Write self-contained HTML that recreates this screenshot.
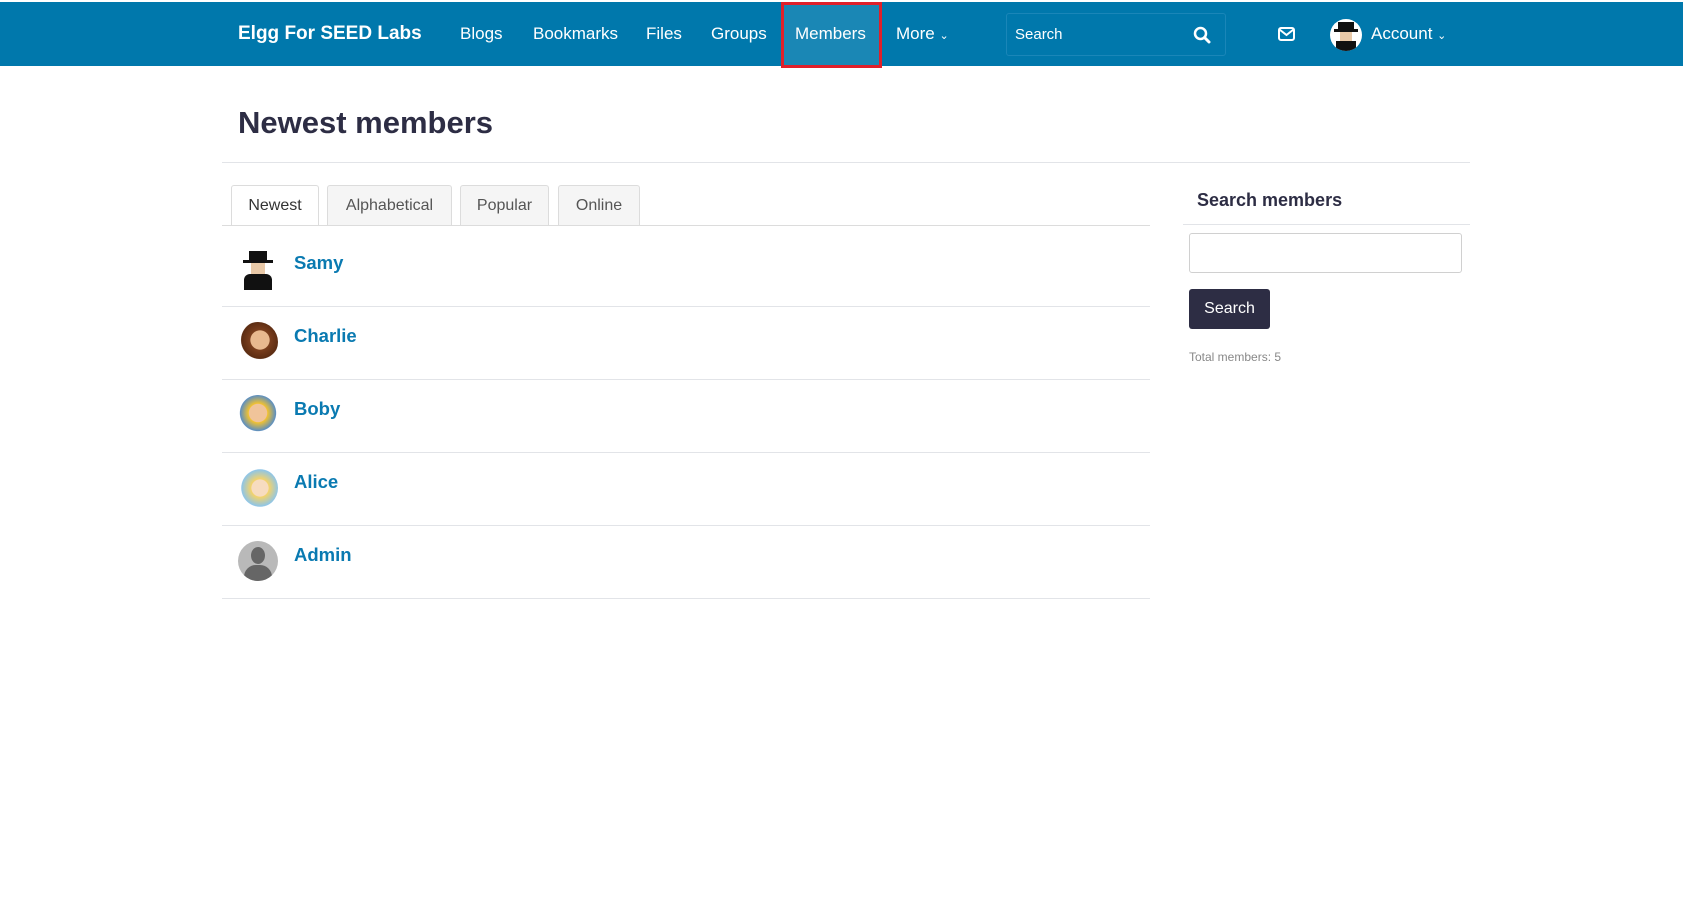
<!DOCTYPE html>
<html><head><meta charset="utf-8"><style>
*{box-sizing:border-box;margin:0;padding:0}
body{width:1683px;height:908px;background:#fff;font-family:"Liberation Sans",sans-serif;color:#2d2d44;position:relative;overflow:hidden}
.nav{position:absolute;top:2px;left:0;width:1683px;height:64px;background:#0078ac}
.a{position:absolute;color:#fff;font-size:17px;top:22px}
.logo{position:absolute;left:238px;top:21px;color:#fff;font-weight:bold;font-size:19px}
.mem{position:absolute;left:781px;top:0;width:101px;height:66px;background:#1a87b5;border:3px solid #e0202a}
.sbox{position:absolute;left:1006px;top:11px;width:220px;height:43px;border:1px solid #1a86b8;border-radius:3px}
h1{position:absolute;left:238px;top:105px;font-size:31px;font-weight:bold;color:#2d2d44}
.hr{position:absolute;height:1px;background:#e2e4e8}
.tab{position:absolute;top:185px;height:40px;border:1px solid #dcdcdc;border-bottom:none;background:#f5f5f5;font-size:16px;color:#555;text-align:center;line-height:40px;border-radius:3px 3px 0 0}
.name{position:absolute;left:294px;font-size:18.5px;font-weight:bold;color:#0a7ab1}
.av{position:absolute;left:238px;width:40px;height:40px;border-radius:50%}
</style></head><body>
<div class="nav">
<div class="logo">Elgg For SEED Labs</div>
<div class="a" style="left:460px">Blogs</div>
<div class="a" style="left:533px">Bookmarks</div>
<div class="a" style="left:646px">Files</div>
<div class="a" style="left:711px">Groups</div>
<div class="mem"></div>
<div class="a" style="left:795px">Members</div>
<div class="a" style="left:896px">More <span style="font-size:11px">⌄</span></div>
<div class="sbox"><span style="position:absolute;left:8px;top:12px;color:#fff;font-size:15px">Search</span>
<svg style="position:absolute;left:186px;top:12px" width="18" height="18" viewBox="0 0 18 18"><circle cx="7.5" cy="7.5" r="5.5" stroke="#fff" stroke-width="2.5" fill="none"/><path d="M11.5 11.5L16 16" stroke="#fff" stroke-width="3" stroke-linecap="round"/></svg></div>
<svg style="position:absolute;left:1278px;top:25px" width="17" height="14" viewBox="0 0 17 14"><rect x="1" y="1" width="15" height="12" rx="2" stroke="#fff" stroke-width="2" fill="none"/><path d="M1.5 2.5L8.5 8L15.5 2.5" stroke="#fff" stroke-width="2" fill="none"/></svg>
<div style="position:absolute;left:1330px;top:17px;width:32px;height:32px;border-radius:50%;background:#fff;overflow:hidden"><div style="position:absolute;left:8px;top:3px;width:16px;height:8px;background:#111"></div><div style="position:absolute;left:4px;top:10px;width:24px;height:3px;background:#111"></div><div style="position:absolute;left:10px;top:13px;width:12px;height:9px;background:#e9c9a8"></div><div style="position:absolute;left:6px;top:22px;width:20px;height:12px;background:#111"></div></div>
<div class="a" style="left:1371px">Account <span style="font-size:11px">⌄</span></div>
</div>
<h1>Newest members</h1>
<div class="hr" style="left:222px;top:162px;width:1248px"></div>
<div class="tab" style="left:231px;width:88px;background:#fff;height:41px;color:#333">Newest</div>
<div class="tab" style="left:327px;width:125px">Alphabetical</div>
<div class="tab" style="left:460px;width:89px">Popular</div>
<div class="tab" style="left:558px;width:82px">Online</div>
<div class="hr" style="left:222px;top:225px;width:928px;background:#dcdcdc"></div>
<div class="av" style="top:250px;background:#fff"><div style="position:absolute;left:11px;top:1px;width:18px;height:10px;background:#111"></div><div style="position:absolute;left:5px;top:10px;width:30px;height:3px;background:#111"></div><div style="position:absolute;left:13px;top:13px;width:14px;height:11px;background:#e9c9a8"></div><div style="position:absolute;left:6px;top:24px;width:28px;height:16px;background:#111;border-radius:6px 6px 0 0"></div></div>
<div class="name" style="top:252px">Samy</div>
<div class="hr" style="left:222px;top:306px;width:928px"></div>
<div class="av" style="top:322px;background:radial-gradient(circle at 55% 45%,#e8b98f 30%,#7a3e1d 32%,#5b2c12 60%,#fff 62%)"></div>
<div class="name" style="top:325px">Charlie</div>
<div class="hr" style="left:222px;top:379px;width:928px"></div>
<div class="av" style="top:395px;background:radial-gradient(circle at 50% 45%,#f0c49a 30%,#f2c230 32%,#5d8fc0 60%,#fff 62%)"></div>
<div class="name" style="top:398px">Boby</div>
<div class="hr" style="left:222px;top:452px;width:928px"></div>
<div class="av" style="top:468px;background:radial-gradient(circle at 55% 50%,#f7dcc0 28%,#f4d36a 30%,#8ec5e8 62%,#fff 64%)"></div>
<div class="name" style="top:471px">Alice</div>
<div class="hr" style="left:222px;top:525px;width:928px"></div>
<div class="av" style="top:541px;background:#b9b9b9;overflow:hidden"><div style="position:absolute;left:13px;top:6px;width:14px;height:17px;border-radius:50%;background:#666"></div><div style="position:absolute;left:6px;top:24px;width:28px;height:20px;border-radius:12px 12px 0 0;background:#666"></div></div>
<div class="name" style="top:544px">Admin</div>
<div class="hr" style="left:222px;top:598px;width:928px"></div>
<div style="position:absolute;left:1197px;top:190px;font-size:18px;font-weight:bold;color:#2d2d44">Search members</div>
<div class="hr" style="left:1183px;top:224px;width:287px"></div>
<div style="position:absolute;left:1189px;top:233px;width:273px;height:40px;border:1px solid #d0d0d0;border-radius:3px"></div>
<div style="position:absolute;left:1189px;top:289px;width:81px;height:40px;background:#2d2d44;border-radius:3px;color:#fff;font-size:16px;text-align:center;line-height:40px">Search</div>
<div style="position:absolute;left:1189px;top:350px;font-size:12px;color:#888">Total members: 5</div>
</body></html>
